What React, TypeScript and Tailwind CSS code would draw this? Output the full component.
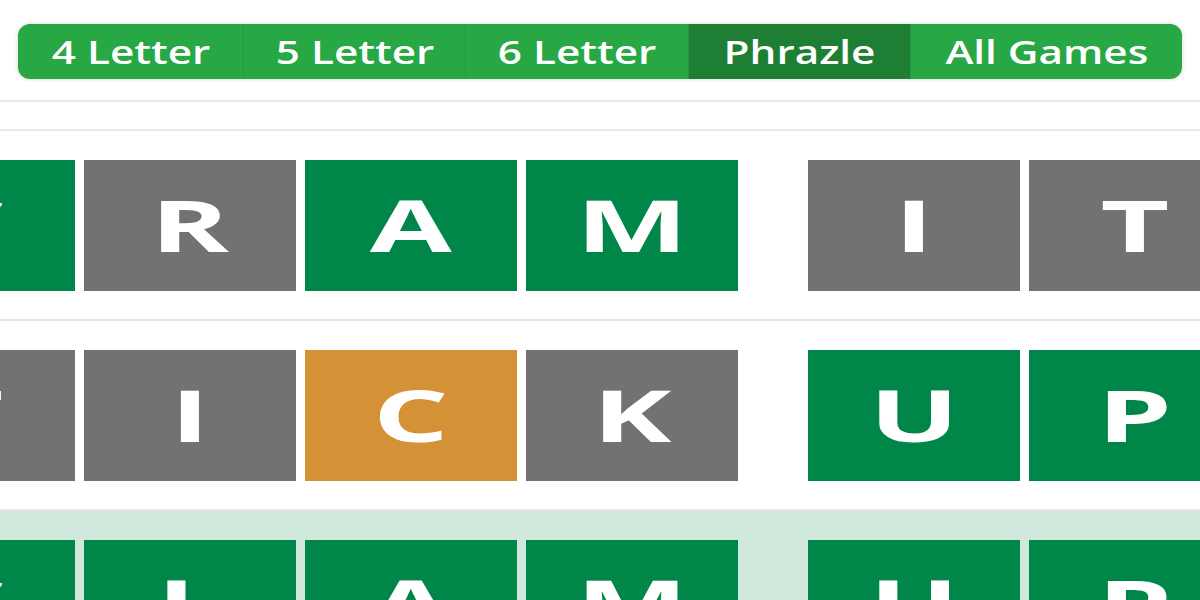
type TileColor = "green" | "gray" | "orange";

interface ITile {
  letter: string;
  color: TileColor;
}

const tileBg: Record<TileColor, string> = {
  green: "bg-[#008649]",
  gray: "bg-[#727272]",
  orange: "bg-[#d59136]",
};

const navItems = [
  { label: "4 Letter", width: "w-[225px]", active: false },
  { label: "5 Letter", width: "w-[222px]", active: false },
  { label: "6 Letter", width: "w-[223px]", active: false },
  { label: "Phrazle", width: "w-[222px]", active: true },
  { label: "All Games", width: "flex-1", active: false },
];

const rows: { words: ITile[][]; current?: boolean }[] = [
  {
    words: [
      [
        { letter: "C", color: "green" },
        { letter: "R", color: "gray" },
        { letter: "A", color: "green" },
        { letter: "M", color: "green" },
      ],
      [
        { letter: "I", color: "gray" },
        { letter: "T", color: "gray" },
      ],
    ],
  },
  {
    words: [
      [
        { letter: "T", color: "gray" },
        { letter: "I", color: "gray" },
        { letter: "C", color: "orange" },
        { letter: "K", color: "gray" },
      ],
      [
        { letter: "U", color: "green" },
        { letter: "P", color: "green" },
      ],
    ],
  },
  {
    current: true,
    words: [
      [
        { letter: "C", color: "green" },
        { letter: "L", color: "green" },
        { letter: "A", color: "green" },
        { letter: "M", color: "green" },
      ],
      [
        { letter: "U", color: "green" },
        { letter: "P", color: "green" },
      ],
    ],
  },
];

const Tile = ({ tile }: { tile: ITile }) => (
  <div
    className={`${tileBg[tile.color]} w-[212px] h-[131px] shrink-0 flex items-center justify-center`}
  >
    <span className="text-white text-[72px] leading-none font-bold scale-x-[1.65] -translate-y-[2px]">
      {tile.letter}
    </span>
  </div>
);

const App = () => {
  return (
    <div className="w-[1200px] h-[600px] overflow-hidden bg-white font-['Open_Sans',sans-serif]">
      <nav className="pt-6 px-[18px]">
        <div className="flex h-[55px] rounded-[12px] overflow-hidden bg-[#28a745] shadow-[0_0_4px_rgba(0,0,0,0.18)]">
          {navItems.map((item, i) => (
            <a
              key={item.label}
              className={`${item.width} ${
                item.active ? "bg-[#1e7e34]" : ""
              } ${
                i > 0 ? "border-l border-[#23983e]" : ""
              } flex items-center justify-center text-white text-[32px] font-semibold`}
            >
              <span className="scale-x-[1.32] whitespace-nowrap">
                {item.label}
              </span>
            </a>
          ))}
        </div>
      </nav>

      <div className="mt-[21px] h-[31px] border-y-2 border-[#e8e8e8]" />

      {rows.map((row, r) => (
        <div
          key={r}
          className={`${r > 0 ? "border-t-2 border-[#e6e6e6]" : ""} ${
            row.current ? "bg-[#d0e9dc]" : ""
          } pt-[29px] pb-[28px]`}
        >
          <div className="flex gap-[70px] -ml-[137px]">
            {row.words.map((word, w) => (
              <div key={w} className="flex gap-[9px]">
                {word.map((tile, t) => (
                  <Tile key={t} tile={tile} />
                ))}
              </div>
            ))}
          </div>
        </div>
      ))}
    </div>
  );
};

export default App;
